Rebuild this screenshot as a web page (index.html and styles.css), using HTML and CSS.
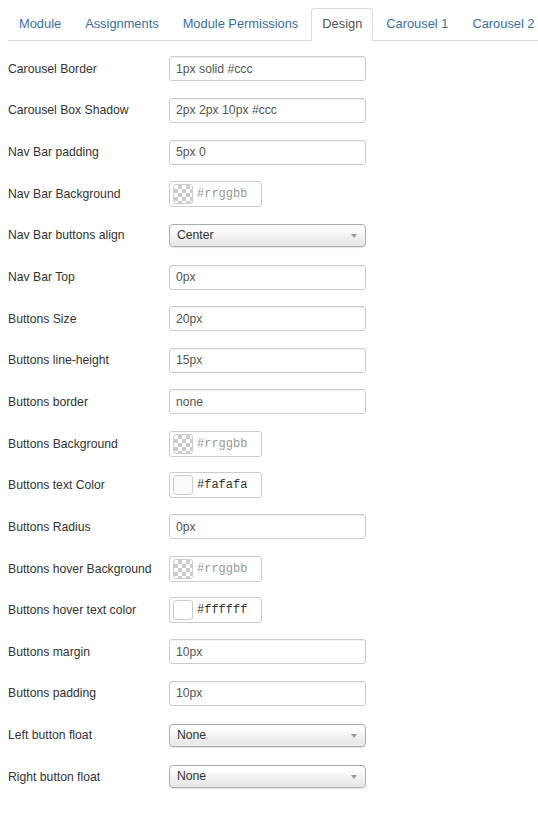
FILE: index.html
```html
<!DOCTYPE html>
<html lang="en">
<head>
  <meta charset="UTF-8" />
  <title>Module Design</title>
  <link rel="stylesheet" href="styles.css">
</head>
<body>
  <ul class="tabs">
    <li><a href="#">Module</a></li>
    <li><a href="#">Assignments</a></li>
    <li><a href="#">Module Permissions</a></li>
    <li class="active"><a href="#">Design</a></li>
    <li><a href="#">Carousel 1</a></li>
    <li><a href="#">Carousel 2</a></li>
  </ul>

  <form class="design-form">
    <div class="row"><label>Carousel Border</label><input type="text" value="1px solid #ccc" /></div>
    <div class="row"><label>Carousel Box Shadow</label><input type="text" value="2px 2px 10px #ccc" /></div>
    <div class="row"><label>Nav Bar padding</label><input type="text" value="5px 0" /></div>
    <div class="row"><label>Nav Bar Background</label>
      <div class="color"><span class="swatch empty"></span><input type="text" placeholder="#rrggbb" /></div>
    </div>
    <div class="row"><label>Nav Bar buttons align</label>
      <div class="select"><span>Center</span><i class="arrow"></i></div>
    </div>
    <div class="row"><label>Nav Bar Top</label><input type="text" value="0px" /></div>
    <div class="row"><label>Buttons Size</label><input type="text" value="20px" /></div>
    <div class="row"><label>Buttons line-height</label><input type="text" value="15px" /></div>
    <div class="row"><label>Buttons border</label><input type="text" value="none" /></div>
    <div class="row"><label>Buttons Background</label>
      <div class="color"><span class="swatch empty"></span><input type="text" placeholder="#rrggbb" /></div>
    </div>
    <div class="row"><label>Buttons text Color</label>
      <div class="color"><span class="swatch" style="background:#fafafa"></span><input type="text" value="#fafafa" /></div>
    </div>
    <div class="row"><label>Buttons Radius</label><input type="text" value="0px" /></div>
    <div class="row"><label>Buttons hover Background</label>
      <div class="color"><span class="swatch empty"></span><input type="text" placeholder="#rrggbb" /></div>
    </div>
    <div class="row"><label>Buttons hover text color</label>
      <div class="color"><span class="swatch" style="background:#ffffff"></span><input type="text" value="#ffffff" /></div>
    </div>
    <div class="row"><label>Buttons margin</label><input type="text" value="10px" /></div>
    <div class="row"><label>Buttons padding</label><input type="text" value="10px" /></div>
    <div class="row"><label>Left button float</label>
      <div class="select"><span>None</span><i class="arrow"></i></div>
    </div>
    <div class="row"><label>Right button float</label>
      <div class="select"><span>None</span><i class="arrow"></i></div>
    </div>
  </form>
</body>
</html>
```

FILE: styles.css
```css
body {
  font-family: "Liberation Sans", Arial, sans-serif;
  color: #333;
  background: #fff;
  margin: 8px 0 8px 8px;
}
.tabs {
  list-style: none;
  margin: 0;
  padding: 0;
  display: flex;
  border-bottom: 1px solid #ddd;
  height: 32px;
}
.tabs li {
  flex: none;
  margin-right: 2px;
  margin-bottom: -1px;
}
.tabs a {
  display: block;
  height: 32px;
  line-height: 30px;
  padding: 0 10px;
  border: 1px solid transparent;
  border-radius: 4px 4px 0 0;
  font-size: 12.85px;
  color: #3a6ea5;
  text-decoration: none;
  white-space: nowrap;
}
.tabs .active a {
  color: #555;
  background: #fff;
  border-color: #ddd #ddd transparent;
}
.design-form {
  padding-top: 7px;
}
.row {
  display: flex;
  align-items: center;
  height: 41.65px;
}
.row label {
  width: 161px;
  font-size: 12.2px;
  color: #333;
}
input[type="text"] {
  box-sizing: border-box;
  width: 197px;
  height: 25px;
  margin: 0;
  padding: 0 6px;
  font-family: "Liberation Sans", Arial, sans-serif;
  font-size: 12.2px;
  color: #555;
  border: 1px solid #ccc;
  border-radius: 3px;
  box-shadow: inset 0 1px 1px rgba(0,0,0,0.06);
  outline: none;
}
.color {
  box-sizing: border-box;
  display: flex;
  align-items: center;
  width: 93px;
  height: 26px;
  border: 1px solid #ccc;
  border-radius: 3px;
  padding-left: 3px;
}
.color input[type="text"] {
  width: 64px;
  height: 22px;
  border: none;
  box-shadow: none;
  padding: 0 0 0 4px;
  font-family: "Liberation Mono", "DejaVu Sans Mono", monospace;
  font-size: 12px;
  color: #333;
}
.color input::placeholder {
  color: #999;
}
.swatch {
  box-sizing: border-box;
  width: 20px;
  height: 20px;
  border: 1px solid #ccc;
  border-radius: 3px;
  flex: none;
}
.swatch.empty {
  background-color: #fff;
  background-image:
    linear-gradient(45deg, #ccc 25%, transparent 25%, transparent 75%, #ccc 75%),
    linear-gradient(45deg, #ccc 25%, transparent 25%, transparent 75%, #ccc 75%);
  background-size: 8px 8px;
  background-position: 0 0, 4px 4px;
}
.select {
  box-sizing: border-box;
  position: relative;
  width: 197px;
  height: 23px;
  line-height: 21px;
  padding-left: 7px;
  font-size: 12.2px;
  color: #333;
  border: 1px solid #aaa;
  border-radius: 4px;
  background: linear-gradient(#fff 20%, #f2f2f2 50%, #e6e6e6 100%);
  box-shadow: 0 0 2px #fff inset, 0 1px 1px rgba(0,0,0,0.1);
}
.select .arrow {
  position: absolute;
  right: 8px;
  top: 9px;
  width: 0;
  height: 0;
  border-left: 3px solid transparent;
  border-right: 3px solid transparent;
  border-top: 4px solid #999;
}
```
